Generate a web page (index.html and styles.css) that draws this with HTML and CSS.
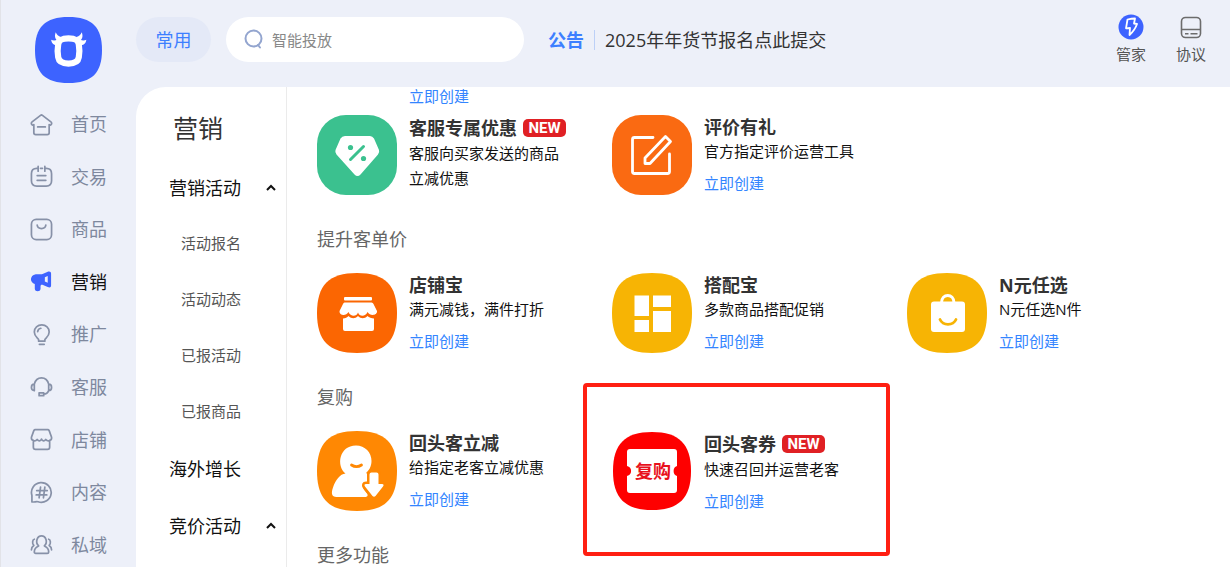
FILE: index.html
```html
<!DOCTYPE html>
<html lang="zh-CN">
<head>
<meta charset="utf-8">
<title>营销</title>
<link rel="stylesheet" href="styles.css">
</head>
<body>
<div class="app">
  <aside class="sidebar">
    <a class="logo" href="#" aria-label="首页">
      <svg viewBox="0 0 67 66" width="67" height="66"><path fill="#3d63ff" d="M33.500 0C57 0 67 10 67 33S57 66 33.500 66 0 56 0 33 10 0 33.500 0Z"/><path fill="none" stroke="#fff" stroke-width="6.200" d="M33.500 21.300c6.500 0 9.500 1.500 10.300 6 .7 4 .7 9 0 13-.7 4.500-3.800 6.300-10.300 6.300s-9.600-1.800-10.300-6.300c-.7-4-.7-9 0-13 .8-4.500 3.800-6 10.300-6Z"/><path fill="#fff" d="M20.800 15.300c1 2.500 2.500 4 5.200 4.700l-3 4.500c-2.500-2-4-5-2.200-9.200ZM46.700 15.300c-1 2.500-2.500 4-5.200 4.700l3 4.500c2.500-2 4-5 2.200-9.200ZM16.200 22.800c2 1 4 1 6.300-.3l1.500 6c-4.500.3-7.500-1.700-7.800-5.700ZM51.300 22.800c-2 1-4 1-6.300-.3l-1.500 6c4.500.3 7.500-1.700 7.800-5.700Z"/></svg>
    </a>
    <nav>
      <ul class="nav">
        <li><a class="nav-item" href="#"><svg class="nav-icon" viewBox="0 0 24 24"><path d="M4 12v8.500q0 2 2 2h12q2 0 2-2V12M4 12.800C1.500 13 .7 10.500 2.200 9.300L11 2.500q1-.8 2 0l8.800 6.800c1.500 1.200.7 3.700-1.800 3.500M8 14.500h8"/></svg>首页</a></li>
        <li><a class="nav-item" href="#"><svg class="nav-icon" viewBox="0 0 24 24"><path d="M8.200 3.500H7q-5.500 0-5.500 5.500v7.500q0 5.500 5.500 5.500h10q5.500 0 5.500-5.500V9q0-5.500-5.500-5.500h-1.200M11 3.500h2M8.500 1.500v5M15.500 1.500v5M7.500 11h9M7.500 16h9"/></svg>交易</a></li>
        <li><a class="nav-item" href="#"><svg class="nav-icon" viewBox="0 0 24 24"><rect x="1.500" y="1.500" width="21" height="21" rx="5"/><path d="M7.500 7.500c.3 2.300 2 3.500 4.500 3.500s4.200-1.200 4.500-3.500"/></svg>商品</a></li>
        <li><a class="nav-item active" href="#" aria-current="page"><svg class="nav-icon solid" viewBox="0 0 24 24"><path fill-rule="evenodd" d="M6 4.500h6.500L18 2c2.500-1 4-.3 4 2v12c0 2.300-1.500 2.800-3.500 1.800L13 15.500c-1.300-.4-2 .2-2 1.500v2.500c0 3.500-6 3.500-6 0v-5C-.5 13.500-.5 5.500 6 4.500ZM15.500 7.500v4.500l3 1.200V6.300Z"/></svg>营销</a></li>
        <li><a class="nav-item" href="#"><svg class="nav-icon" viewBox="0 0 24 24"><path d="M9 19v-1.500c0-1.600-4.500-3-4.500-8.200C4.500 4.800 8 2 12.300 2S20 4.800 20 9.300c0 5.200-4.500 6.600-4.500 8.200V19ZM9.800 22.300h5M8 9c.3-2 1.500-3.200 3.300-3.500"/></svg>推广</a></li>
        <li><a class="nav-item" href="#"><svg class="nav-icon" viewBox="0 0 24 24"><path d="M4.500 8.500C5.500 4.500 8.500 2 12 2s6.500 2.500 7.500 6.500M4.500 8.500v6.800C2.500 15.300 1.500 14 1.500 12s1-3.500 3-3.500ZM19.500 8.500v6.800c2 0 3-1.300 3-3.300s-1-3.500-3-3.500ZM19.500 15.300c-.8 2-2.500 3.700-5 3.700M9.500 17.500h4.800v3H9.500Z"/></svg>客服</a></li>
        <li><a class="nav-item" href="#"><svg class="nav-icon" viewBox="0 0 24 24"><path d="M5.500 1.700h13q1 0 1.500 1l2.500 7c.5 3.500-4 4.800-6 2.300-1.500 2-3.500 2-4.500-.5-1 2.500-3 2.500-4.500.5-2 2.500-6.500 1.200-6-2.300l2.500-7q.5-1 1.500-1ZM3.500 13v7q0 2.300 2.300 2.300h12.400q2.300 0 2.300-2.300v-7"/></svg>店铺</a></li>
        <li><a class="nav-item" href="#"><svg class="nav-icon" viewBox="0 0 24 24"><path d="M2 21.800V15A10.300 10.300 0 1 1 8.500 21.700c-2-.7-4 .6-6.500.1ZM11 6.500l-1.500 11M15.500 6.500l-1.500 11M7 10h11M6.500 14.500h11"/></svg>内容</a></li>
        <li><a class="nav-item" href="#"><svg class="nav-icon" viewBox="0 0 24 24"><path d="M9 13.500C5 9.500 7.500 3 12 3s7 6.500 3 10.500c3 1.300 4.500 3.300 4.500 6.200 0 1-.5 1.500-1.500 1.500H6c-1 0-1.500-.5-1.500-1.500 0-2.900 1.500-4.900 4.500-6.200ZM4.500 6.500C2.500 7 2 11 4 13c-1.500 1-2.500 2.500-2.500 4.500M19.500 6.500c2 .5 2.500 4.500.5 6.500 1.500 1 2.500 2.500 2.500 4.500"/></svg>私域</a></li>
      </ul>
    </nav>
  </aside>

  <div class="main">
    <header class="topbar">
      <button class="pill" type="button">常用</button>
      <label class="search">
        <svg viewBox="0 0 20 22" width="20" height="22"><circle cx="9.500" cy="9.500" r="8"/><path d="M14 16l2 2.500"/></svg>
        <input type="search" placeholder="智能投放" aria-label="搜索">
      </label>
      <a class="notice" href="#"><strong>公告</strong><span>2025年年货节报名点此提交</span></a>
      <div class="tools">
        <a class="tool" href="#"><svg viewBox="0 0 26 26" width="26" height="26"><circle cx="13" cy="13" r="12.500" fill="#3d63ff"/><path d="M9.500 5.500q4-1 7.500-1l-1 5 3 .5q-2 6-7.500 11l.5-7-4 .3Z" fill="none" stroke="#fff" stroke-width="1.800" stroke-linejoin="round"/></svg>管家</a>
        <a class="tool" href="#"><svg viewBox="0 0 26 26" width="26" height="26"><g fill="none" stroke="#6c6c6c" stroke-width="1.600"><rect x="3.500" y="3.500" width="19" height="20" rx="4"/><path d="M3.500 15.500h19M7 19.800h3.500M12.500 19.800h7"/></g></svg>协议</a>
      </div>
    </header>

    <div class="panel">
      <nav class="submenu">
        <h1>营销</h1>
        <button class="group" type="button" aria-expanded="true">营销活动<svg class="caret" viewBox="0 0 10 8"><path d="M1 6l4-4 4 4"/></svg></button>
        <a class="sub" href="#">活动报名</a>
        <a class="sub" href="#">活动动态</a>
        <a class="sub" href="#">已报活动</a>
        <a class="sub" href="#">已报商品</a>
        <a class="group" href="#">海外增长</a>
        <button class="group" type="button" aria-expanded="true">竞价活动<svg class="caret" viewBox="0 0 10 8"><path d="M1 6l4-4 4 4"/></svg></button>
      </nav>

      <main class="content">
        <a class="create tail" href="#">立即创建</a>
        <section class="cards">
          <article class="card">
            <svg class="tile" viewBox="0 0 80 80"><rect width="80" height="80" rx="29" fill="#3bc18f"/><path fill="#fff" d="M28 21h25q2.500 0 4 2.500l5 11.500q.8 2.500-1 4.500L43.500 59.500q-3 3-6 0L19.500 39.500q-1.800-2-1-4.500l5-11.500q1.500-2.500 4.500-2.500Z"/><path d="M33.500 44.500l13-13" stroke="#3bc18f" stroke-width="3" stroke-linecap="round"/><circle cx="33.500" cy="32.500" r="2.600" fill="#3bc18f"/><circle cx="46.500" cy="43.500" r="2.600" fill="#3bc18f"/></svg>
            <div><h3 class="tagged">客服专属优惠<span class="badge">NEW</span></h3><p>客服向买家发送的商品<br>立减优惠</p></div>
          </article>
          <article class="card">
            <svg class="tile" viewBox="0 0 80 80"><rect width="80" height="80" rx="29" fill="#fa6a12"/><path fill="none" stroke="#fff" stroke-width="2.800" stroke-linecap="round" stroke-linejoin="round" d="M41 22.500H22.500q-2 0-2 2v32q0 2 2 2h33q2 0 2-2V39M33 43l20.500-21.500 5 5L38 48.500h-5Z"/></svg>
            <div><h3>评价有礼</h3><p>官方指定评价运营工具</p><a class="create" href="#">立即创建</a></div>
          </article>
        </section>

        <h2>提升客单价</h2>
        <section class="cards">
          <article class="card">
            <svg class="tile" viewBox="0 0 80 80"><path fill="#fb6602" d="M40 0C68 0 80 12 80 40S68 80 40 80 0 68 0 40 12 0 40 0Z"/><g fill="#fff"><rect x="27" y="24" width="28" height="3.500" rx="1"/><path d="M27.500 29.500h27q1.500 0 2 1.500l3.500 7c.5 4.500-7 5.500-9.500 1-2 5-8 5-9.500.5-1.500 4.500-7.500 4.500-9.500-.5-2.500 4.500-9.500 3.500-9-1l3.500-7q.5-1.500 1.500-1.500Z"/><path d="M26 45.500c2.500 0 4-1 5.500-2.500 3 3 6.500 3 9.500 0 3 3 6.500 3 9.500 0 1.500 1.500 4 2.500 6.500 2.500V56q0 2-2 2H28q-2 0-2-2Z"/></g></svg>
            <div><h3>店铺宝</h3><p>满元减钱，满件打折</p><a class="create" href="#">立即创建</a></div>
          </article>
          <article class="card">
            <svg class="tile" viewBox="0 0 80 80"><path fill="#f7b404" d="M40 0C68 0 80 12 80 40S68 80 40 80 0 68 0 40 12 0 40 0Z"/><g fill="#fff"><rect x="22.500" y="22.500" width="14.500" height="20.500"/><rect x="41" y="22.500" width="18" height="11.500"/><rect x="22.500" y="47" width="14.500" height="12"/><rect x="41" y="38" width="18" height="21"/></g></svg>
            <div><h3>搭配宝</h3><p>多款商品搭配促销</p><a class="create" href="#">立即创建</a></div>
          </article>
          <article class="card">
            <svg class="tile" viewBox="0 0 80 80"><path fill="#f7b404" d="M40 0C68 0 80 12 80 40S68 80 40 80 0 68 0 40 12 0 40 0Z"/><rect x="24" y="28.500" width="34" height="30.500" rx="3" fill="#fff"/><path d="M34.500 30c0-10 12.500-10 12.500 0" fill="none" stroke="#fff" stroke-width="3"/><path d="M33 46.500c3 6.500 13 6.500 16 0" fill="none" stroke="#f7b404" stroke-width="2.800" stroke-linecap="round"/></svg>
            <div><h3>N元任选</h3><p>N元任选N件</p><a class="create" href="#">立即创建</a></div>
          </article>
        </section>

        <h2>复购</h2>
        <section class="cards">
          <article class="card">
            <svg class="tile" viewBox="0 0 80 80"><path fill="#ff8803" d="M40 0C68 0 80 12 80 40S68 80 40 80 0 68 0 40 12 0 40 0Z"/><path fill="#fff" d="M39 14.500c9 0 15.500 7 15.500 15.500 0 5.500-2.500 9.500-5.500 12 2.500 1.500 3.500 4 3 9-3 0-6 1-6.500 3.500s3 6 4.500 8c1.500 2.500 0 3.500-2 3.500H19.500c-5 0-5.500-4-3.500-9.500 2.500-7.500 7-13.500 12.500-14C19 35 22 14.500 39 14.500Z"/><path d="M34.500 34c3 2 7 2 10 0" fill="none" stroke="#ff8803" stroke-width="2.800" stroke-linecap="round"/><path d="M52.500 43.500q0-2 2-2h5q2 0 2 2V53h3.500q2.500 0 1 2.500l-7.500 9.500q-1.500 1.500-3 0L48 55.500q-1.500-2.500 1-2.500h3.500Z" fill="#fff" stroke="#ff8803" stroke-width="5" stroke-linejoin="round" paint-order="stroke"/></svg>
            <div><h3>回头客立减</h3><p>给指定老客立减优惠</p><a class="create" href="#">立即创建</a></div>
          </article>
          <article class="card marked">
            <svg class="tile" viewBox="0 0 80 80"><path fill="#fe0000" d="M40 1C67 1 79 13 79 40S67 79 40 79 1 67 1 40 13 1 40 1Z"/><path fill="#fff" d="M18 18h44q3 0 3 3v14c-4.500 1-4.500 9 0 10v14q0 3-3 3H18q-3 0-3-3V45c5.500-1 5.500-9 0-10V21q0-3 3-3Z"/><text class="tile-text" x="41" y="47" text-anchor="middle">复购</text></svg>
            <div><h3 class="tagged">回头客券<span class="badge">NEW</span></h3><p>快速召回并运营老客</p><a class="create" href="#">立即创建</a></div>
          </article>
        </section>

        <h2>更多功能</h2>
      </main>
    </div>
  </div>
</div>
</body>
</html>
```
FILE: styles.css
```css
* { box-sizing: border-box; }

body {
  margin: 0;
  background: #edf0f9;
  color: #111;
  font: 15px/20px "Open Sans", "Noto Sans CJK SC", sans-serif;
}

a { color: inherit; text-decoration: none; }
button, input { font: inherit; color: inherit; border: 0; background: none; padding: 0; }
h1, h2, h3, p, ul { margin: 0; padding: 0; }

.app {
  display: flex;
  height: 100vh;
  overflow: hidden;
  border-left: 1px solid #e2e3e8;
}

/* Sidebar */
.sidebar { flex: none; width: 135px; padding-top: 17px; }
.logo { display: block; margin-left: 34px; height: 66px; }
.logo svg { display: block; }
.nav {
  display: grid;
  grid-auto-rows: 1fr;
  min-height: 473px;
  margin-top: 15px;
  list-style: none;
}
.nav-item {
  display: flex;
  align-items: center;
  gap: 18px;
  height: 100%;
  padding-left: 29px;
  color: #7e889e;
  font-size: 18px;
}
.nav-item.active { color: #111; }
.nav-icon {
  width: 23px;
  height: 23px;
  fill: none;
  stroke: #8791a8;
  stroke-width: 1.8;
  stroke-linecap: round;
  stroke-linejoin: round;
}
.nav-icon.solid { fill: #3d63ff; stroke: none; }

/* Top bar */
.main { flex: 1; min-width: 0; display: flex; flex-direction: column; }
.topbar {
  flex: none;
  display: flex;
  align-items: flex-start;
  height: 87px;
  padding: 17px 23px 0 0;
}
.pill {
  width: 75px;
  height: 45px;
  margin-right: 15px;
  border-radius: 23px;
  background: #e4e9f7;
  color: #3d7fff;
  font-size: 18px;
}
.search {
  display: flex;
  align-items: center;
  gap: 8px;
  width: 298px;
  height: 45px;
  padding: 0 18px;
  border-radius: 23px;
  background: #fff;
}
.search svg { flex: none; fill: none; stroke: #93a5cf; stroke-width: 2; stroke-linecap: round; }
.search input { flex: 1; min-width: 0; outline: 0; }
.search input::placeholder { color: #888; opacity: 1; }
.notice {
  display: flex;
  align-items: center;
  height: 45px;
  margin-left: 24px;
  color: #333;
  font-size: 18px;
}
.notice strong { padding-right: 10px; border-right: 1px solid #bcd0f7; color: #3d7fff; }
.notice span { padding-left: 10px; }
.tools { display: flex; gap: 30px; margin-left: auto; padding-right: 1px; }
.tool {
  display: flex;
  flex-direction: column;
  align-items: center;
  gap: 4px;
  margin-top: -3px;
  color: #555;
}

/* Panel */
.panel {
  flex: 1;
  min-height: 0;
  display: flex;
  overflow: hidden;
  border-radius: 30px 0 0 0;
  background: #fff;
}
.submenu {
  flex: none;
  display: flex;
  flex-direction: column;
  width: 151px;
  padding-top: 23px;
  border-right: 1px solid #ebebeb;
}
.submenu h1 {
  margin-bottom: 13px;
  padding-left: 37px;
  color: #333;
  font-size: 25px;
  font-weight: 400;
  line-height: 36px;
}
.group {
  flex: none;
  display: flex;
  align-items: center;
  justify-content: space-between;
  height: 57px;
  padding: 0 10px 0 33px;
  font-size: 18px;
}
.caret { width: 10px; height: 8px; fill: none; stroke: #111; stroke-width: 2; }
.sub {
  flex: none;
  height: 56px;
  padding-left: 45px;
  color: #555;
  line-height: 54px;
}

/* Content */
.content { flex: 1; min-width: 0; padding-left: 30px; }
.content h2 {
  margin: 32px 0 22px;
  color: #666;
  font-size: 18px;
  font-weight: 400;
  line-height: 24px;
}
.cards { display: grid; grid-template-columns: repeat(auto-fill, 295px); }
.card { position: relative; display: flex; gap: 12px; }
.tile { flex: none; width: 80px; height: 80px; }
.tile-text { fill: #e8101c; font-size: 18px; font-weight: 700; }
.card h3 {
  display: flex;
  align-items: center;
  height: 24px;
  color: #333;
  font-size: 18px;
}
.card .tagged { height: 26px; }
.card p { line-height: 25px; }
.badge {
  width: 43px;
  margin-left: 6px;
  border-radius: 5px;
  background: #e02024;
  color: #fff;
  font: 700 15px/18px Roboto, sans-serif;
  text-align: center;
}
.create { display: block; margin-top: 9px; color: #3385ff; }
.create.tail { margin: 0 0 9px 92px; line-height: 19px; }

/* Highlight frame drawn around a card */
.marked::after {
  content: "";
  position: absolute;
  inset: -48px 17px -45px -29px;
  border: 4px solid #ff1f12;
  border-radius: 4px;
  pointer-events: none;
}
```
